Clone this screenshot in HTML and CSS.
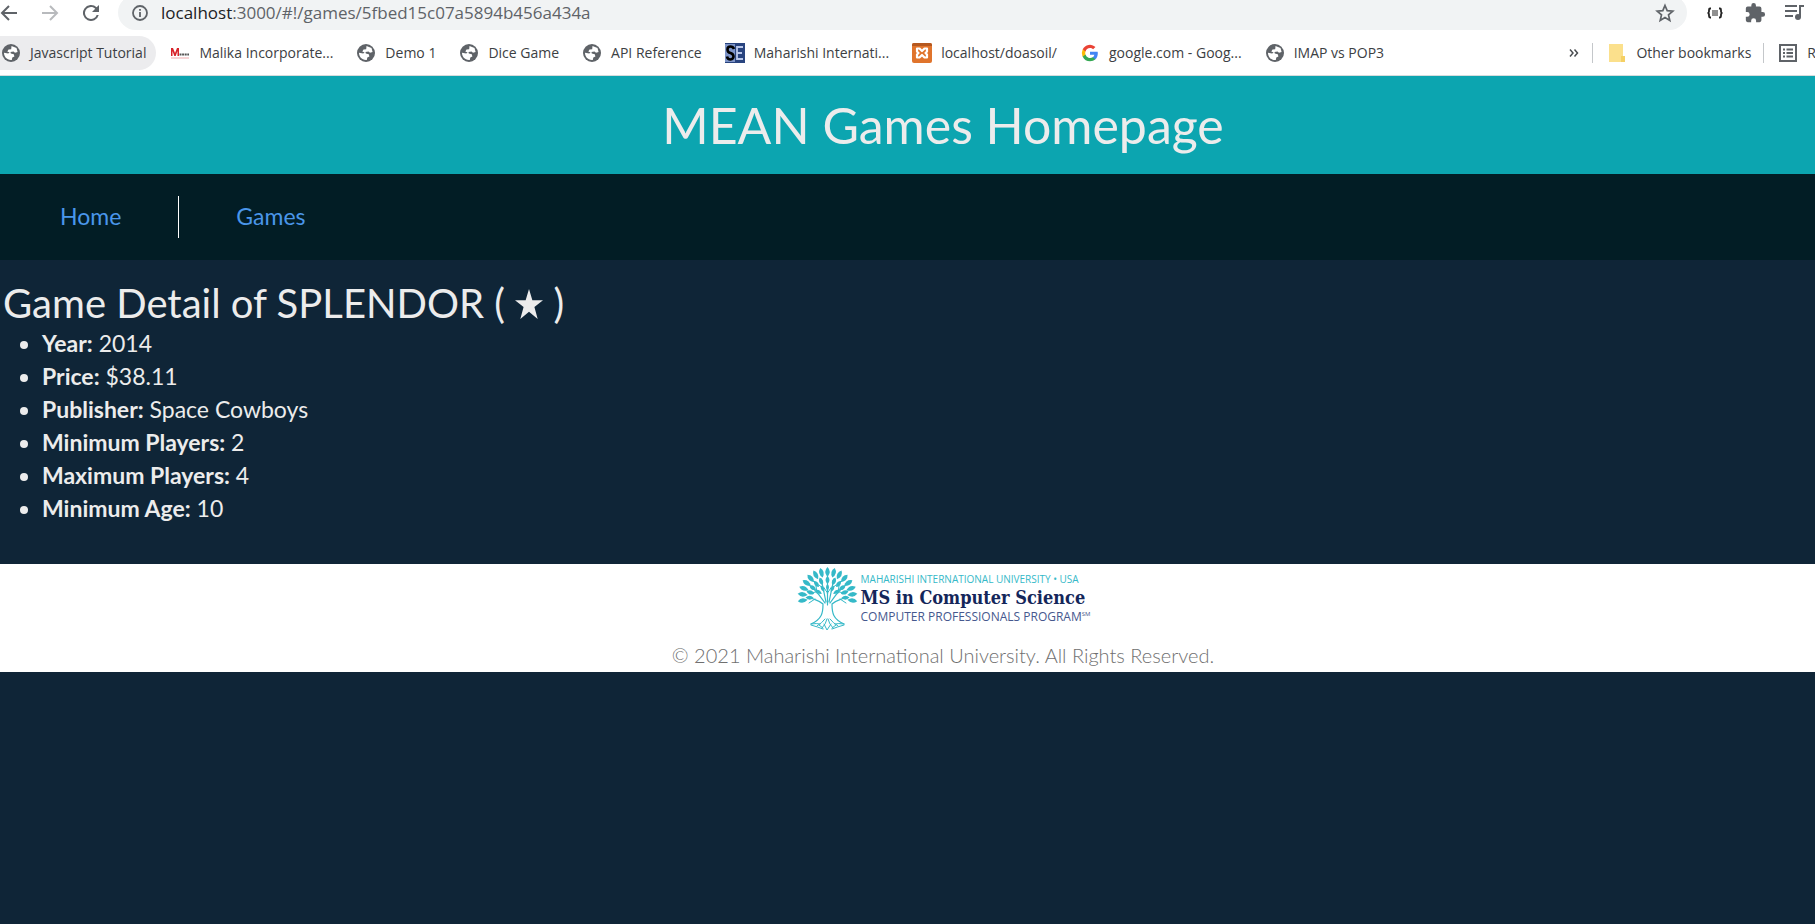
FILE: index.html
```html
<!DOCTYPE html>
<html lang="en">
<head>
<meta charset="utf-8">
<title>MEAN Games</title>
<link rel="stylesheet" href="styles.css">
</head>
<body>
<svg class="defs" aria-hidden="true">
  <symbol id="globe" viewBox="0 0 20 20">
    <circle cx="10" cy="10" r="9" fill="#5f6368"/>
    <path d="M10.5 3 L15.500 5 L16.600 9 L14 9.800 L12.500 8.400 L9.500 9 L9.800 10.500 L12.800 11.200 L13.400 13.500 L11.300 14.500 L10.800 17 C6 17.500 2.800 13.500 3 9.800 L7.200 10.600 L8.600 9.600 L6.300 8.500 L7.500 6.400 L10.200 6.200 Z" fill="#fff"/>
  </symbol>
</svg>

<div class="browser">
  <div class="toolbar">
    <button class="tool" aria-label="Back"><svg width="24" height="24" viewBox="0 0 24 24"><path d="M20 12H5M12 5l-7 7 7 7" fill="none" stroke="#5f6368" stroke-width="2"/></svg></button>
    <button class="tool" aria-label="Forward"><svg width="24" height="24" viewBox="0 0 24 24"><path d="M5 12h15M13 5l7 7-7 7" fill="none" stroke="#b8babd" stroke-width="2"/></svg></button>
    <button class="tool" aria-label="Reload"><svg width="24" height="24" viewBox="0 0 24 24"><path d="M17.650 6.350A8 8 0 1 0 19.730 14h-2.080A6 6 0 1 1 12 6c1.660 0 3.140.690 4.220 1.780L13 11h7V4z" fill="#5f6368"/></svg></button>
    <div class="address">
      <svg width="20" height="20" viewBox="0 0 20 20"><circle cx="10" cy="10" r="7" fill="none" stroke="#5f6368" stroke-width="1.800"/><path d="M10 9v5M10 6v1.800" stroke="#5f6368" stroke-width="1.800"/></svg>
      <p class="url"><span class="host">localhost</span>:3000/#!/games/5fbed15c07a5894b456a434a</p>
      <button class="tool star" aria-label="Bookmark this page"><svg width="20" height="20" viewBox="0 0 20 20"><path d="M10 2.500l2.200 5.200 5.600.500-4.300 3.700 1.300 5.500L10 14.500l-4.800 2.900 1.300-5.500L2.200 8.200l5.600-.500z" fill="none" stroke="#5f6368" stroke-width="1.700"/></svg></button>
    </div>
    <div class="extensions">
      <button class="tool" aria-label="JSON viewer"><svg width="20" height="20" viewBox="0 0 20 20"><path d="M6 5.500H5Q4 5.500 4 7v1.500Q4 10 2.500 10 4 10 4 11.500V13q0 1.500 1 1.500h1M14 5.500h1q1 0 1 1.500v1.500q0 1.500 1.500 1.500-1.500 0-1.500 1.500V13q0 1.500-1 1.500h-1" fill="none" stroke="#222" stroke-width="1.800"/><path d="M7 8h6M7 10h6M7 12h6" stroke="#222" stroke-width="1"/></svg></button>
      <button class="tool" aria-label="Extensions"><svg width="22" height="22" viewBox="0 0 24 24"><path d="M20.500 11H19V7a2 2 0 0 0-2-2h-4V3.500a2.500 2.500 0 0 0-5 0V5H4a2 2 0 0 0-2 2v3.800h1.500a2.700 2.700 0 0 1 0 5.400H2V20a2 2 0 0 0 2 2h3.800v-1.500a2.700 2.700 0 0 1 5.400 0V22H17a2 2 0 0 0 2-2v-4h1.500a2.500 2.500 0 0 0 0-5z" fill="#5f6368"/></svg></button>
      <button class="tool" aria-label="Media controls"><svg width="24" height="20" viewBox="0 0 24 20"><path d="M2 3h12M2 8h12M2 13h8" stroke="#5f6368" stroke-width="2"/><circle cx="15" cy="14" r="3" fill="#5f6368"/><path d="M17 14V3h4" fill="none" stroke="#5f6368" stroke-width="2"/></svg></button>
    </div>
  </div>

  <nav class="bookmarks" aria-label="Bookmarks">
    <a class="bookmark current" href="#"><svg class="fav"><use href="#globe"/></svg>Javascript Tutorial</a>
    <a class="bookmark" href="#"><svg class="fav" viewBox="0 0 20 20"><path d="M1 13V5h2l2 5 2-5h2v8H7.500V8L5.700 13H4.300L2.500 8v5z" fill="#d8232a"/><path d="M9.500 11.500h9.500" stroke="#555" stroke-width="2" stroke-dasharray="2 .6"/><path d="M1 15h18" stroke="#f0a9ab" stroke-width="1"/></svg>Malika Incorporate...</a>
    <a class="bookmark" href="#"><svg class="fav"><use href="#globe"/></svg>Demo 1</a>
    <a class="bookmark" href="#"><svg class="fav"><use href="#globe"/></svg>Dice Game</a>
    <a class="bookmark" href="#"><svg class="fav"><use href="#globe"/></svg>API Reference</a>
    <a class="bookmark" href="#"><svg class="fav" viewBox="0 0 20 20"><path d="M0 0h20v20H0z" fill="#29447f"/><path d="M0 1h10v18H0z" fill="#7d94c8"/><path d="M9 6Q8 3.500 5.500 3.500 2.500 3.500 2.500 6.500T5.500 10Q8.500 11 8.500 13.500T5.500 16.500Q2.500 16.500 2 13.500" fill="none" stroke="#000" stroke-width="2.600"/><path d="M18 4h-6v12h6M12 10h5" fill="none" stroke="#b9c7ea" stroke-width="1.800"/></svg>Maharishi Internati...</a>
    <a class="bookmark" href="#"><svg class="fav" viewBox="0 0 20 20"><rect width="20" height="20" rx="2" fill="#e0742c"/><path d="M0 2q0-2 2-2h16q2 0 2 2v1H0z" fill="#b5581f"/><path d="M5 5.500h2.500L10 8l2.500-2.500H15v3L13.500 10l1.500 1.500v3h-2.500L10 12l-2.500 2.500H5v-3L6.500 10 5 8.500z" fill="none" stroke="#fff" stroke-width="2.200" stroke-linejoin="round"/></svg>localhost/doasoil/</a>
    <a class="bookmark" href="#"><svg class="fav" viewBox="-2 -2 22 22"><path d="M17.600 9.200c0-.6-.1-1.200-.2-1.700H9v3.500h4.800a4.100 4.100 0 0 1-1.800 2.700v2.200h2.900c1.700-1.600 2.700-3.900 2.700-6.700z" fill="#4285f4"/><path d="M9 18c2.400 0 4.500-.8 6-2.200l-3-2.200a5.400 5.400 0 0 1-8-2.900H1v2.300A9 9 0 0 0 9 18z" fill="#34a853"/><path d="M4 10.700a5.400 5.400 0 0 1 0-3.400V5H1a9 9 0 0 0 0 8z" fill="#fbbc05"/><path d="M9 3.600c1.300 0 2.500.5 3.400 1.300L15 2.300A9 9 0 0 0 1 5l3 2.300a5.400 5.400 0 0 1 5-3.700z" fill="#ea4335"/></svg>google.com - Goog...</a>
    <a class="bookmark" href="#"><svg class="fav"><use href="#globe"/></svg>IMAP vs POP3</a>
    <div class="bookmarks-end">
      <button class="tool more" aria-label="More bookmarks"><svg width="10" height="10" viewBox="0 0 10 10"><path d="M1 1.500l3 3.500-3 3.500M5.500 1.500l3 3.500-3 3.500" fill="none" stroke="#4a4d51" stroke-width="1.500"/></svg></button>
      <span class="divider"></span>
      <a class="bookmark" href="#"><svg class="fav" viewBox="0 0 20 20"><path d="M2 1h14v18H2z" fill="#fbe08c"/><path d="M14 13h4v6h-4z" fill="#f5d064"/></svg>Other bookmarks</a>
      <span class="divider"></span>
      <a class="bookmark" href="#"><svg class="fav" viewBox="0 0 20 20"><path d="M2 2h16v16H2z" fill="none" stroke="#5f6368" stroke-width="2"/><path d="M5 6.500h2M5 10h2M5 13.500h2M8.500 6.500H15M8.500 10H15M8.500 13.500H15" stroke="#5f6368" stroke-width="1.800"/></svg>R</a>
    </div>
  </nav>
</div>

<div class="page">
  <header class="banner"><h1>MEAN Games Homepage</h1></header>
  <nav class="menu">
    <a href="#">Home</a>
    <a href="#">Games</a>
  </nav>
  <main class="detail">
    <h2>Game Detail of SPLENDOR ( <svg class="rating" role="img" aria-label="star" viewBox="0 0 30 32"><path d="M15 0l3.600 12H30l-9.200 7.200L24.300 32 15 24.200 5.700 32l3.500-12.800L0 12h11.400z" fill="currentColor"/></svg> )</h2>
    <ul>
      <li><b>Year:</b> 2014</li>
      <li><b>Price:</b> $38.11</li>
      <li><b>Publisher:</b> Space Cowboys</li>
      <li><b>Minimum Players:</b> 2</li>
      <li><b>Maximum Players:</b> 4</li>
      <li><b>Minimum Age:</b> 10</li>
    </ul>
  </main>
  <footer class="footer">
    <div class="logo">
      <svg class="tree" viewBox="0 0 60 64" fill="none" stroke="#35b9c8" stroke-width="1.200" stroke-linecap="round">
        <path d="M26 37C26 46 25 52 14 57M35 37C35 46 36 52 47 57M26 37C22 33 17 33 12 30M35 37C39 33 44 33 49 30M28 36C24 30 20 25 15 20M33 36C37 30 41 25 46 20M29 35C27 26 26 20 24 12M32 35C34 26 35 20 37 12M30.500 38V8"/>
        <path d="M14 57q6-1 9 0M47 57q-6-1-9 0M14 58q7 2 12 4M47 58q-7 2-12 4M20 59q5-3 8-7M41 59q-5-3-8-7M25 61q4-4 5-9M36 61q-4-4-5-9M27 57l3 6 4-6M22 58l4 3M39 58l-4 3" stroke-width="1"/>
        <path d="M19 25l-6 1M20 26l-1-7M42 25l6 1M41 26l1-7M27 22l-5-4M34 22l5-4M18 32l-6 4M43 32l6 4M30.500 26l-4-6M30.500 26l4-6" stroke-width="1"/>
        <g fill="#35b9c8" stroke="none">
          <path id="l" d="M30.500 0q4.500 4.500 0 10-4.500-5.500 0-10z"/>
          <use href="#l" transform="rotate(-14 30.500 30)"/><use href="#l" transform="rotate(-28 30.500 30)"/><use href="#l" transform="rotate(-42 30.500 30)"/><use href="#l" transform="rotate(-56 30.500 30)"/><use href="#l" transform="rotate(-70 30.500 30)"/><use href="#l" transform="rotate(-84 30.500 30)"/><use href="#l" transform="rotate(-98 30.500 30)"/>
          <use href="#l" transform="rotate(14 30.500 30)"/><use href="#l" transform="rotate(28 30.500 30)"/><use href="#l" transform="rotate(42 30.500 30)"/><use href="#l" transform="rotate(56 30.500 30)"/><use href="#l" transform="rotate(70 30.500 30)"/><use href="#l" transform="rotate(84 30.500 30)"/><use href="#l" transform="rotate(98 30.500 30)"/>
          <path id="m" d="M30.500 9q4 4 0 8-4-4 0-8z"/>
          <use href="#m" transform="rotate(-21 30.500 31)"/><use href="#m" transform="rotate(-38 30.500 31)"/><use href="#m" transform="rotate(-55 30.500 31)"/><use href="#m" transform="rotate(-72 30.500 31)"/><use href="#m" transform="rotate(-89 30.500 31)"/><use href="#m" transform="rotate(21 30.500 31)"/><use href="#m" transform="rotate(38 30.500 31)"/><use href="#m" transform="rotate(55 30.500 31)"/><use href="#m" transform="rotate(72 30.500 31)"/><use href="#m" transform="rotate(89 30.500 31)"/>
          <path id="n" d="M30.500 17q3 3 0 7-3-4 0-7z"/>
          <use href="#n" transform="rotate(-28 30.500 31)"/><use href="#n" transform="rotate(-55 30.500 31)"/><use href="#n" transform="rotate(28 30.500 31)"/><use href="#n" transform="rotate(55 30.500 31)"/>
        </g>
      </svg>
      <div class="wordmark">
        <span class="university">MAHARISHI INTERNATIONAL UNIVERSITY • USA</span>
        <strong class="degree">MS in Computer Science</strong>
        <span class="program">COMPUTER PROFESSIONALS PROGRAM<sup>SM</sup></span>
      </div>
    </div>
    <p class="copyright">© 2021 Maharishi International University. All Rights Reserved.</p>
  </footer>
</div>
</body>
</html>
```
FILE: styles.css
```css
* { box-sizing: border-box; }
body {
  margin: 0;
  overflow: hidden;
  background: #0f2537;
  color: #ececec;
  font: 23px/33px Lato, sans-serif;
}
h1, h2, p, ul { margin: 0; }
.defs { display: none; }

.browser {
  background: #fff;
  border-bottom: 1px solid #d5dcdd;
  color: #3c4043;
  font-family: "Open Sans", "Noto Sans", sans-serif;
}
.toolbar { display: flex; height: 30px; align-items: flex-end; }
.tool {
  display: flex;
  align-items: center;
  justify-content: center;
  flex: none;
  width: 40px;
  height: 35px;
  padding: 0;
  border: 0;
  background: none;
}
.toolbar > .tool:first-child { width: 30px; margin-left: -6px; }
.toolbar > .tool:nth-child(2) { width: 50px; }
.toolbar > .tool:nth-child(3) { width: 34px; }
.address {
  flex: 1;
  display: flex;
  align-items: center;
  height: 35px;
  margin-left: 10px;
  padding-left: 12px;
  border-radius: 18px;
  background: #f1f3f4;
}
.url { flex: 1; margin-left: 11px; font-size: 17px; line-height: 24px; color: #5f6368; }
.host { color: #202124; }
.star { width: 44px; }
.extensions { display: flex; width: 128px; padding-left: 8px; }

.bookmarks {
  display: flex;
  align-items: center;
  height: 45px;
  font-size: 14px;
  line-height: 20px;
  white-space: nowrap;
}
.bookmark {
  display: flex;
  align-items: center;
  gap: 9px;
  height: 34px;
  margin-right: 23px;
  color: #3c4043;
  text-decoration: none;
}
.current { margin-right: 14px; padding: 0 10px 0 1px; border-radius: 0 17px 17px 0; background: #ececee; }
.fav { flex: none; width: 20px; height: 20px; }
.bookmarks-end { display: flex; align-items: center; margin-left: auto; }
.bookmarks-end .bookmark { margin: 0 12px 0 14px; }
.bookmarks-end .bookmark:last-child { margin-right: -1px; }
.more { width: 12px; margin-right: 12px; }
.divider { width: 1px; height: 20px; background: #c4c7ca; }

.page { margin-right: -71px; }
.banner { padding: 16px 0; background: #0ca5b0; text-align: center; }
h1 { font-size: 50px; line-height: 66px; font-weight: 400; }
.menu { display: flex; padding: 22px 3px; background: #021d25; }
.menu a { padding: 4px 57px 6px; line-height: 32px; color: #4a96ea; text-decoration: none; }
.menu a + a { border-left: 1px solid #fff; }
.detail { padding: 20px 3px 39px; }
h2 { font-size: 40px; line-height: 47px; font-weight: 400; }
.rating { width: 28px; height: 30px; vertical-align: -1px; }
ul { padding-left: 39px; }
.footer { padding: 3px 0 0; background: #fff; color: #6f6f6f; text-align: center; }
.logo { display: flex; justify-content: center; gap: 3px; }
.tree { width: 62px; height: 64px; }
.wordmark { display: flex; flex-direction: column; align-items: flex-start; padding-top: 4px; font-family: "Open Sans", sans-serif; white-space: nowrap; }
.university { font-size: 10px; line-height: 16px; color: #35b9c8; }
.degree { font: bold 18px/21px "DejaVu Serif Condensed", "DejaVu Serif", serif; color: #14265a; }
.program { font-size: 12px; line-height: 18px; color: #46588e; }
.program sup { font-size: 6px; line-height: 6px; }
.copyright { padding: 10px 0 3px; font-size: 20px; line-height: 28px; font-weight: 300; }
```
